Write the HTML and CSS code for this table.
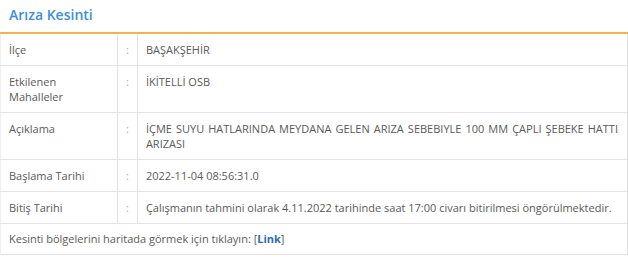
FILE: index.html
```html
<!DOCTYPE html>
<html lang="tr">
<head>
<meta charset="utf-8">
<link rel="stylesheet" href="styles.css">
</head>
<body>
<div class="panel">
  <div class="panel-head">Arıza Kesinti</div>
  <table class="info">
    <tr><td class="lbl">İlçe</td><td class="sep">:</td><td class="val">BAŞAKŞEHİR</td></tr>
    <tr><td class="lbl">Etkilenen Mahalleler</td><td class="sep">:</td><td class="val">İKİTELLİ OSB</td></tr>
    <tr><td class="lbl">Açıklama</td><td class="sep">:</td><td class="val">İÇME SUYU HATLARINDA MEYDANA GELEN ARIZA SEBEBIYLE 100 MM ÇAPLI ŞEBEKE HATTI ARIZASI</td></tr>
    <tr><td class="lbl">Başlama Tarihi</td><td class="sep">:</td><td class="val">2022-11-04 08:56:31.0</td></tr>
    <tr><td class="lbl">Bitiş Tarihi</td><td class="sep">:</td><td class="val">Çalışmanın tahmini olarak 4.11.2022 tarihinde saat 17:00 civarı bitirilmesi öngörülmektedir.</td></tr>
    <tr><td class="full" colspan="3">Kesinti bölgelerini haritada görmek için tıklayın: [<a class="lnk" href="#">Link</a>]</td></tr>
  </table>
</div>
</body>
</html>
```
FILE: styles.css
```css
html, body {
  margin: 0;
  padding: 0;
  background: #ffffff;
}
.panel {
  width: 628px;
  font-family: "Open Sans", "Noto Sans", sans-serif;
  color: #5a5a5a;
}
.panel-head {
  height: 32px;
  line-height: 30px;
  padding-left: 9px;
  font-size: 14px;
  font-weight: 600;
  color: #3d8fd8;
  border-bottom: 2px solid #f1b24f;
  box-sizing: content-box;
}
.info {
  width: 628px;
  border-collapse: collapse;
  font-size: 11px;
  line-height: 15px;
  border-right: 1px solid #e3e3e3;
  border-left: 1px solid #f0f0f0;
}
.info td {
  padding: 8px 8px 8px 8px;
  border-bottom: 1px solid #e3e3e3;
  vertical-align: top;
  text-align: justify;
}
.info .lbl {
  width: 100px;
  border-right: 1px solid #e3e3e3;
}
.info .sep {
  width: 2px;
  color: #aaaaaa;
  border-right: 1px solid #e3e3e3;
}
.info .val {
  padding-right: 9px;
}
.info .full {
  padding-top: 7px;
}
.lnk {
  color: #2f6db3;
  font-weight: 700;
  text-decoration: none;
}
```
